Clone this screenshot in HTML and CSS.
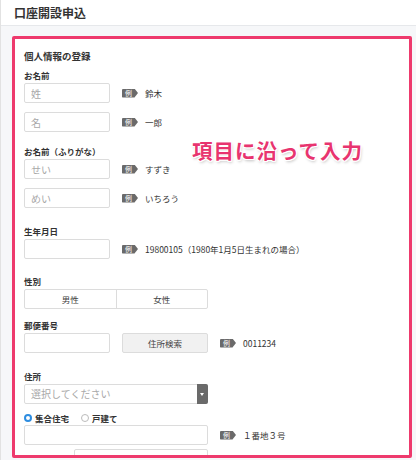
FILE: index.html
```html
<!DOCTYPE html>
<html lang="ja">
<head>
  <meta charset="UTF-8" />
  <meta name="viewport" content="width=device-width, initial-scale=1.0" />
  <title>口座開設申込</title>
  <link rel="stylesheet" href="styles.css">
</head>
<body>
  <div class="page">
    <header class="page-head">口座開設申込</header>

    <main class="page-body">
      <div class="form-card">
        <div class="note">項目に沿って入力</div>

        <h3 class="section-title">個人情報の登録</h3>

        <div class="field f-name">
          <div class="label">お名前</div>
          <div class="row">
            <input class="input short" type="text" placeholder="姓" />
            <span class="ex">例</span><span class="ex-text">鈴木</span>
          </div>
          <div class="row next">
            <input class="input short" type="text" placeholder="名" />
            <span class="ex">例</span><span class="ex-text">一郎</span>
          </div>
        </div>

        <div class="field f-kana">
          <div class="label">お名前（ふりがな）</div>
          <div class="row">
            <input class="input short" type="text" placeholder="せい" />
            <span class="ex">例</span><span class="ex-text">すずき</span>
          </div>
          <div class="row next">
            <input class="input short" type="text" placeholder="めい" />
            <span class="ex">例</span><span class="ex-text">いちろう</span>
          </div>
        </div>

        <div class="field f-birth">
          <div class="label">生年月日</div>
          <div class="row">
            <input class="input short" type="text" />
            <span class="ex">例</span><span class="ex-text">19800105（1980年1月5日生まれの場合）</span>
          </div>
        </div>

        <div class="field f-sex">
          <div class="label">性別</div>
          <div class="segment">
            <span class="seg-item">男性</span>
            <span class="seg-item">女性</span>
          </div>
        </div>

        <div class="field f-zip">
          <div class="label">郵便番号</div>
          <div class="row">
            <input class="input short" type="text" />
            <button class="btn">住所検索</button>
            <span class="ex">例</span><span class="ex-text">0011234</span>
          </div>
        </div>

        <div class="field f-addr">
          <div class="label">住所</div>
          <div class="select">
            <span class="select-text">選択してください</span>
            <span class="select-arrow"></span>
          </div>
          <div class="radios">
            <label class="radio"><span class="dot checked"></span>集合住宅</label>
            <label class="radio"><span class="dot"></span>戸建て</label>
          </div>
          <div class="row">
            <input class="input wide" type="text" />
            <span class="ex">例</span><span class="ex-text">１番地３号</span>
          </div>
          <div class="row building">
            <span class="inline-label">建物名</span>
            <input class="input mid" type="text" />
            <span class="ex">例</span><span class="ex-text">マイトマンション</span>
          </div>
        </div>
      </div>
    </main>
  </div>
</body>
</html>
```

FILE: styles.css
```css
:root {
  --pink: #ee3a6d;
  --text: #333;
  --line: #dcdcdc;
  --tag: #6a6a6a;
}

* {
  box-sizing: border-box;
}

body {
  margin: 0;
  font-family: "Noto Sans CJK JP", "Noto Sans", sans-serif;
  color: var(--text);
  background: #f6f7f9;
}

.page {
  height: 460px;
  border-left: 1px solid #e2e2e2;
  overflow: hidden;
}

.page-head {
  height: 26px;
  padding-left: 13px;
  background: #fff;
  border-bottom: 1px solid #e6e8eb;
  font-size: 12px;
  font-weight: 700;
  line-height: 25px;
}

.page-body {
  padding: 10px 0 0 11px;
}

.form-card {
  position: relative;
  width: 400px;
  height: 422px;
  padding: 10px 0 0 9px;
  background: #fff;
  border: 3px solid var(--pink);
  border-radius: 2px;
  overflow: hidden;
}

.note {
  position: absolute;
  left: 177px;
  top: 99px;
  font-size: 20.5px;
  font-weight: 700;
  line-height: 24px;
  letter-spacing: 1px;
  color: #e8346f;
  text-shadow: 1px 0 #fff, -1px 0 #fff, 0 1px #fff, 0 -1px #fff,
    1px 1px #fff, -1px -1px #fff, 1px -1px #fff, -1px 1px #fff,
    1px 2px 3px rgba(0, 0, 0, 0.25);
}

.section-title {
  margin: 0;
  font-size: 9.5px;
  font-weight: 700;
  line-height: 14px;
}

.label {
  font-size: 8.5px;
  font-weight: 700;
  line-height: 12px;
  margin-bottom: 2px;
}

.field { margin-top: 15px; }
.f-name { margin-top: 6px; }
.f-kana { margin-top: 13px; }
.f-birth { margin-top: 17px; }
.f-sex { margin-top: 16px; }
.f-zip { margin-top: 10px; }
.f-addr { margin-top: 17px; }

.row {
  display: flex;
  align-items: center;
  height: 20px;
}

.row.next { margin-top: 9px; }
.row.building { margin-top: 4px; }

.input {
  height: 20px;
  padding: 0 6px;
  border: 1px solid var(--line);
  border-radius: 2px;
  font-family: inherit;
  font-size: 10px;
  color: var(--text);
  background: #fff;
}

.input::placeholder { color: #a8a8a8; }

.short { width: 86px; }
.wide { width: 184px; }
.mid { width: 134px; }

.inline-label {
  width: 50px;
  font-size: 8.5px;
  font-weight: 700;
  line-height: 12px;
}

.ex {
  width: 16px;
  height: 9px;
  margin-left: 12px;
  padding-right: 3px;
  background: var(--tag);
  color: #fff;
  font-size: 7px;
  line-height: 9px;
  text-align: center;
  border-radius: 1px;
  clip-path: polygon(0 0, 78% 0, 100% 50%, 78% 100%, 0 100%);
}

.ex-text {
  margin-left: 7px;
  font-size: 8.5px;
  white-space: nowrap;
}

.segment {
  display: flex;
  width: 184px;
  height: 20px;
  border: 1px solid var(--line);
  border-radius: 2px;
}

.seg-item {
  flex: 1;
  font-size: 8.5px;
  line-height: 18px;
  text-align: center;
  color: #444;
}

.seg-item + .seg-item { border-left: 1px solid var(--line); }

.btn {
  width: 86px;
  height: 20px;
  margin-left: 12px;
  border: 1px solid var(--line);
  border-radius: 2px;
  background: #f1f1f1;
  font-family: inherit;
  font-size: 8.5px;
  color: #444;
}

.select {
  display: flex;
  width: 184px;
  height: 20px;
  border: 1px solid var(--line);
  border-radius: 2px;
}

.select-text {
  flex: 1;
  padding-left: 6px;
  font-size: 10px;
  line-height: 18px;
  color: #a8a8a8;
}

.select-arrow {
  position: relative;
  width: 11px;
  margin: -1px -1px -1px 0;
  background: var(--tag);
  border-radius: 0 2px 2px 0;
}

.select-arrow::after {
  content: "";
  position: absolute;
  left: 3px;
  top: 9px;
  border-left: 2.5px solid transparent;
  border-right: 2.5px solid transparent;
  border-top: 3px solid #fff;
}

.radios {
  display: flex;
  gap: 12px;
  height: 12px;
  margin: 8px 0 1px;
  font-size: 8.5px;
  font-weight: 700;
  line-height: 12px;
}

.radio {
  display: flex;
  align-items: center;
  gap: 3px;
}

.dot {
  width: 8px;
  height: 8px;
  border: 1px solid #bbb;
  border-radius: 50%;
  background: #fff;
}

.dot.checked {
  border: 2.5px solid #2e8de0;
  background: #fff;
  box-shadow: inset 0 0 0 5px #fff;
}
```
